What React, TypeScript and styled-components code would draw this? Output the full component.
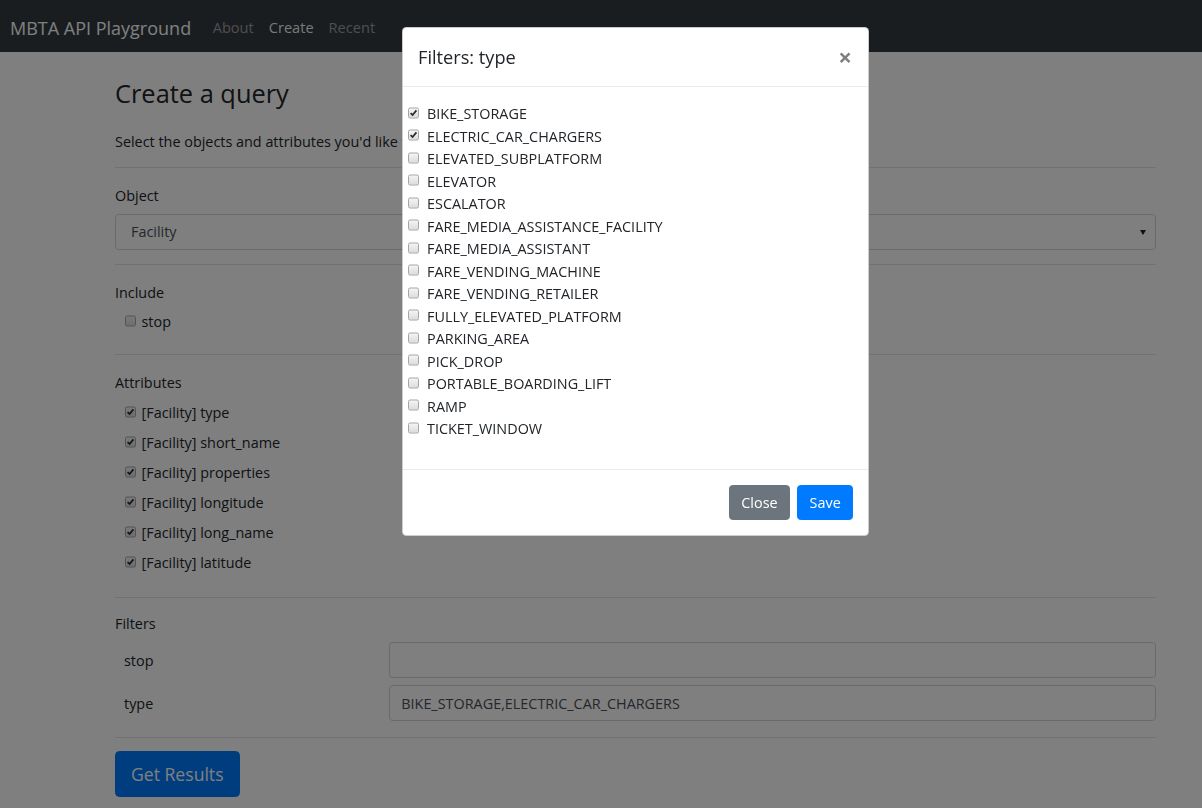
import React from "react";
import styled, { createGlobalStyle } from "styled-components";

const FONT = `"Open Sans", "Noto Sans", "Liberation Sans", sans-serif`;

const Global = createGlobalStyle`
  html, body { margin: 0; padding: 0; }
  body {
    background: #fff;
    font-family: ${FONT};
    font-size: 14.4px;
    line-height: 22.5px;
    color: #212529;
    overflow: hidden;
  }
  * { box-sizing: border-box; }
`;

const Page = styled.div`
  width: 1202px;
  height: 808px;
  position: relative;
  overflow: hidden;
`;

const Navbar = styled.nav`
  height: 52px;
  background: #343a40;
  display: flex;
  align-items: center;
  padding: 0 10px;
`;

const Brand = styled.a`
  font-size: 18px;
  line-height: 28px;
  color: #fff;
  margin-right: 14px;
  margin-top: 4px;
  text-decoration: none;
`;

const NavLink = styled.a<{ $active?: boolean }>`
  padding: 0 7.5px;
  font-size: 14.6px;
  line-height: 22.5px;
  color: ${(p) => (p.$active ? "rgba(255,255,255,0.95)" : "rgba(255,255,255,0.5)")};
  text-decoration: none;
  margin-top: 2px;
`;

const Container = styled.main`
  width: 1041px;
  margin-left: 115px;
  padding-top: 26px;
`;

const Header = styled.header`
  padding-bottom: 14px;
`;

const Title = styled.h3`
  margin: 0 0 21px;
  font-size: 25.4px;
  line-height: 31.5px;
  font-weight: 500;
`;

const Lead = styled.p`
  margin: 0;
`;

const Section = styled.section<{ $top?: number; $bottom: number }>`
  border-top: 1px solid rgba(0, 0, 0, 0.1);
  padding-top: ${(p) => p.$top ?? 17}px;
  padding-bottom: ${(p) => p.$bottom}px;
`;

const Label = styled.div<{ $mb?: number }>`
  margin-bottom: ${(p) => p.$mb ?? 6.5}px;
`;

const SelectBox = styled.div`
  height: 35.6px;
  border: 1px solid #ced4da;
  border-radius: 3.75px;
  display: flex;
  align-items: center;
  justify-content: space-between;
  padding: 1px 9px 0 15px;
  color: #495057;
`;

const Caret = styled.span`
  width: 0;
  height: 0;
  border-left: 3px solid transparent;
  border-right: 3px solid transparent;
  border-top: 5px solid #222;
`;

const CheckRow = styled.label<{ $gap: number; $indent: number }>`
  display: flex;
  align-items: center;
  gap: ${(p) => p.$gap}px;
  margin-left: ${(p) => p.$indent}px;
  line-height: 22.5px;
  color: #212529;
`;

const SpacedRow = styled(CheckRow)`
  margin-bottom: 7.5px;
`;

const Box = styled.span`
  width: 11px;
  height: 11px;
  flex: none;
  border: 1px solid #a4a4a4;
  border-radius: 2px;
  background: linear-gradient(#f4f4f4, #dcdcdc);
  display: flex;
  align-items: center;
  justify-content: center;
  transform: translateY(-1.5px);
`;

const FilterRow = styled.div`
  display: grid;
  grid-template-columns: 274px 1fr;
  align-items: center;
  margin-bottom: 7.4px;
  &:last-child { margin-bottom: 0; }
`;

const FilterLabel = styled.div`
  padding: 1px 0 0 9px;
`;

const Input = styled.div`
  height: 35.6px;
  border: 1px solid #ced4da;
  border-radius: 3.75px;
  padding: 1px 11.25px 0;
  display: flex;
  align-items: center;
  color: #495057;
`;

const Button = styled.button<{ $variant: "primary" | "secondary"; $lg?: boolean }>`
  font-family: ${FONT};
  border: 1px solid transparent;
  color: #fff;
  cursor: pointer;
  background: ${(p) => (p.$variant === "primary" ? "#007bff" : "#6c757d")};
  border-color: ${(p) => (p.$variant === "primary" ? "#007bff" : "#6c757d")};
  font-size: ${(p) => (p.$lg ? 17.6 : 14.4)}px;
  line-height: ${(p) => (p.$lg ? 28.1 : 22.5)}px;
  padding: ${(p) => (p.$lg ? "8px 15px 7px" : "6px 11.25px 5.2px")};
  border-radius: ${(p) => (p.$lg ? 4.5 : 3.75)}px;
`;

const Backdrop = styled.div`
  position: fixed;
  inset: 0;
  background: rgba(0, 0, 0, 0.5);
`;

const Modal = styled.div`
  position: fixed;
  top: 27px;
  left: 402px;
  width: 467px;
  background: #fff;
  border: 1px solid rgba(0, 0, 0, 0.2);
  border-radius: 4.5px;
  display: flex;
  flex-direction: column;
`;

const ModalHeader = styled.div`
  display: flex;
  align-items: center;
  justify-content: space-between;
  padding: 15px;
  border-bottom: 1px solid #e9ecef;
`;

const ModalTitle = styled.h5`
  margin: 0;
  font-size: 18.2px;
  line-height: 28.1px;
  font-weight: 500;
  color: #212529;
`;

const CloseX = styled.button`
  background: none;
  border: none;
  padding: 0;
  margin-right: 1px;
  font-family: ${FONT};
  font-size: 24px;
  font-weight: 700;
  line-height: 1;
  color: #000;
  opacity: 0.5;
`;

const ModalBody = styled.div`
  padding: 16px 15px 15px;
`;

const OptionList = styled.div`
  margin-bottom: 13px;
`;

const ModalFooter = styled.div`
  display: flex;
  justify-content: flex-end;
  gap: 7.5px;
  padding: 15px;
  border-top: 1px solid #e9ecef;
`;

function Checkbox({ checked }: { checked?: boolean }) {
  return (
    <Box>
      {checked && (
        <svg width="9" height="9" viewBox="0 0 9 9">
          <path d="M1.6 4.6 L3.6 6.6 L7.4 1.9" fill="none" stroke="#2a2a2a" strokeWidth="1.7" />
        </svg>
      )}
    </Box>
  );
}

const attributes = ["type", "short_name", "properties", "longitude", "long_name", "latitude"];

const types = [
  "BIKE_STORAGE",
  "ELECTRIC_CAR_CHARGERS",
  "ELEVATED_SUBPLATFORM",
  "ELEVATOR",
  "ESCALATOR",
  "FARE_MEDIA_ASSISTANCE_FACILITY",
  "FARE_MEDIA_ASSISTANT",
  "FARE_VENDING_MACHINE",
  "FARE_VENDING_RETAILER",
  "FULLY_ELEVATED_PLATFORM",
  "PARKING_AREA",
  "PICK_DROP",
  "PORTABLE_BOARDING_LIFT",
  "RAMP",
  "TICKET_WINDOW",
];

const checkedTypes = new Set(["BIKE_STORAGE", "ELECTRIC_CAR_CHARGERS"]);

export default function App() {
  return (
    <Page>
      <Global />
      <Navbar>
        <Brand>MBTA API Playground</Brand>
        <NavLink>About</NavLink>
        <NavLink $active>Create</NavLink>
        <NavLink>Recent</NavLink>
      </Navbar>
      <Container>
        <Header>
          <Title>Create a query</Title>
          <Lead>Select the objects and attributes you'd like to query from the MBTA API.</Lead>
        </Header>
        <Section $bottom={14.4}>
          <Label $mb={6.5}>Object</Label>
          <SelectBox>
            <span>Facility</span>
            <Caret />
          </SelectBox>
        </Section>
        <Section $bottom={20.5}>
          <Label $mb={6.5}>Include</Label>
          <CheckRow $gap={5.5} $indent={10}>
            <Checkbox />
            stop
          </CheckRow>
        </Section>
        <Section $bottom={15}>
          <Label $mb={8}>Attributes</Label>
          {attributes.map((a) => (
            <SpacedRow key={a} $gap={5.5} $indent={10}>
              <Checkbox checked />
              [Facility] {a}
            </SpacedRow>
          ))}
        </Section>
        <Section $top={15} $bottom={16.4}>
          <Label $mb={6.5}>Filters</Label>
          <FilterRow>
            <FilterLabel>stop</FilterLabel>
            <Input />
          </FilterRow>
          <FilterRow>
            <FilterLabel>type</FilterLabel>
            <Input>BIKE_STORAGE,ELECTRIC_CAR_CHARGERS</Input>
          </FilterRow>
        </Section>
        <Section $top={13} $bottom={20}>
          <Button $variant="primary" $lg>Get Results</Button>
        </Section>
      </Container>
      <Backdrop />
      <Modal>
        <ModalHeader>
          <ModalTitle>Filters: type</ModalTitle>
          <CloseX>×</CloseX>
        </ModalHeader>
        <ModalBody>
          <OptionList>
            {types.map((t) => (
              <CheckRow key={t} $gap={8} $indent={-10}>
                <Checkbox checked={checkedTypes.has(t)} />
                {t}
              </CheckRow>
            ))}
          </OptionList>
        </ModalBody>
        <ModalFooter>
          <Button $variant="secondary">Close</Button>
          <Button $variant="primary">Save</Button>
        </ModalFooter>
      </Modal>
    </Page>
  );
}
